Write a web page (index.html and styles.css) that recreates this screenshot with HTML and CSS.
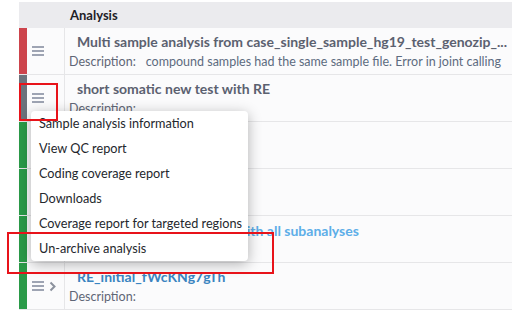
FILE: index.html
```html
<!DOCTYPE html>
<html lang="en">
<head>
    <meta charset="UTF-8">
    <meta name="viewport" content="width=device-width, initial-scale=1.0">
    <title>Analyses</title>
    <link rel="stylesheet" href="styles.css">
</head>
<body>
    <div class="table">
        <div class="table-head">Analysis</div>

        <div class="row">
            <div class="bar bar-red"></div>
            <div class="tools"><span class="burger"><i></i><i></i><i></i></span></div>
            <div class="cell">
                <div class="title">Multi sample analysis from case_single_sample_hg19_test_genozip_...</div>
                <div class="desc"><span class="label">Description:</span><span class="value">compound samples had the same sample file. Error in joint calling</span></div>
            </div>
        </div>

        <div class="row">
            <div class="bar bar-grey"></div>
            <div class="tools"><span class="burger"><i></i><i></i><i></i></span></div>
            <div class="cell">
                <div class="title">short somatic new test with RE</div>
                <div class="desc"><span class="label">Description:</span></div>
            </div>
        </div>

        <div class="row">
            <div class="bar bar-green"></div>
            <div class="tools"></div>
            <div class="cell"></div>
        </div>

        <div class="row">
            <div class="bar bar-green"></div>
            <div class="tools"></div>
            <div class="cell"></div>
        </div>

        <div class="row">
            <div class="bar bar-green"></div>
            <div class="tools"></div>
            <div class="cell">
                <div class="title title-light">Tumor/normal RE test v2 with all subanalyses</div>
            </div>
        </div>

        <div class="row">
            <div class="bar bar-green"></div>
            <div class="tools">
                <span class="burger"><i></i><i></i><i></i></span>
                <svg class="chevron" width="7" height="11" viewBox="0 0 7 11"><path d="M1.5 1.5 L5.5 5.5 L1.5 9.5" fill="none" stroke="#8b919d" stroke-width="2"/></svg>
            </div>
            <div class="cell">
                <div class="title title-link">RE_initial_fWcKNg7gTh</div>
                <div class="desc"><span class="label">Description:</span></div>
            </div>
        </div>
    </div>

    <ul class="menu">
        <li>Sample analysis information</li>
        <li>View QC report</li>
        <li>Coding coverage report</li>
        <li>Downloads</li>
        <li>Coverage report for targeted regions</li>
        <li>Un-archive analysis</li>
    </ul>

    <div class="mark mark-toggle"></div>
    <div class="mark mark-item"></div>
</body>
</html>
```

FILE: styles.css
```css
body {
    font-family: "Lato", "Noto Sans", sans-serif;
    background-color: #fff;
    margin: 0;
    padding: 0;
    width: 512px;
    height: 311px;
    overflow: hidden;
    position: relative;
}

.table {
    margin: 2px 0 0 19px;
    background-color: #fbfbfc;
}

.table-head {
    height: 26px;
    line-height: 26px;
    padding-left: 51px;
    background-color: #ebebee;
    font-size: 13px;
    font-weight: bold;
    color: #1e2127;
}

.row {
    display: flex;
    height: 46px;
    border-bottom: 1px solid #e6e6e8;
}

.bar {
    width: 8px;
    flex-shrink: 0;
}

.bar-red {
    background-color: #cd444c;
}

.bar-grey {
    background-color: #6c737c;
}

.bar-green {
    background-color: #2a9a48;
}

.tools {
    width: 38px;
    flex-shrink: 0;
    border-right: 1px solid #e6e6e8;
    display: flex;
    align-items: center;
    padding-left: 5px;
    gap: 5px;
    box-sizing: border-box;
}

.burger {
    display: flex;
    flex-direction: column;
    gap: 2px;
    width: 12px;
}

.burger i {
    display: block;
    height: 2px;
    background-color: #9ea4b3;
}

.chevron {
    display: block;
}

.cell {
    flex: 1;
    min-width: 0;
    padding: 4px 0 0 4px;
    overflow: hidden;
}

.title {
    padding-left: 8px;
    font-size: 14px;
    font-weight: bold;
    color: #5b6170;
    white-space: nowrap;
    line-height: 20px;
}

.title-light {
    color: #5daee8;
    margin-top: 1px;
}

.title-link {
    color: #3a84c0;
}

.desc {
    font-size: 12.5px;
    color: #5f6676;
    white-space: nowrap;
    line-height: 20px;
}

.desc .label {
    margin-right: 10px;
}

.desc .value {
    color: #5d6b80;
}

.menu {
    position: absolute;
    left: 31px;
    top: 111px;
    width: 217px;
    margin: 0;
    padding: 0;
    list-style: none;
    background-color: #fff;
    border-radius: 4px;
    box-shadow: 0 3px 14px rgba(0, 0, 0, 0.3);
}

.menu li {
    height: 25px;
    line-height: 25px;
    padding-left: 8px;
    font-size: 12.7px;
    color: #24272d;
    white-space: nowrap;
}

.mark {
    position: absolute;
    border: 2px solid #e8131a;
    box-sizing: border-box;
}

.mark-toggle {
    left: 19px;
    top: 83px;
    width: 39px;
    height: 38px;
}

.mark-item {
    left: 7px;
    top: 232px;
    width: 267px;
    height: 42px;
}
```
